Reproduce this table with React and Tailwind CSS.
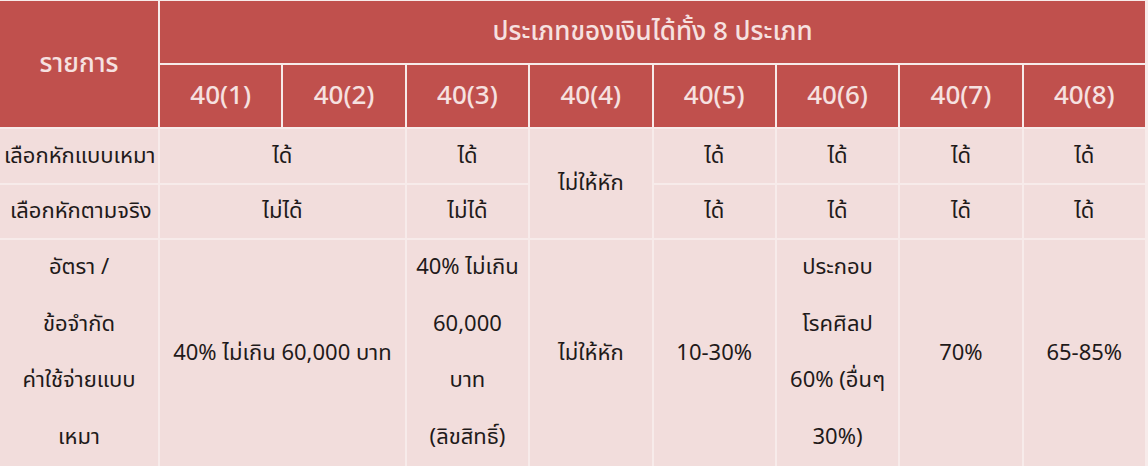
import React from "react";

const cell = "flex items-center justify-center text-center bg-[#f2dddc] text-[#1f1a1a] text-[22px]";
const head = "flex items-center justify-center bg-[#c0504d] text-[#f6e1e0] text-[26px] font-medium";

const codes = ["40(1)", "40(2)", "40(3)", "40(4)", "40(5)", "40(6)", "40(7)", "40(8)"];

const App = () => {
  return (
    <div
      className="w-[1148px] h-[466px] bg-[#f7ebea] pt-[1px] overflow-hidden"
      style={{ fontFamily: '"Noto Sans Thai", "Noto Sans", "DejaVu Sans", sans-serif' }}
    >
      <div className="w-[1145px] grid grid-cols-[158px_repeat(8,1fr)] grid-rows-[62px_62px_54px_53px_226px] gap-[2px] bg-[#f7ebea]">
        {/* header */}
        <div className={`${head} row-span-2`}>รายการ</div>
        <div className={`${head} col-span-8`}>ประเภทของเงินได้ทั้ง 8 ประเภท</div>
        {codes.map((c) => (
          <div key={c} className={head}>{c}</div>
        ))}

        {/* row 1 */}
        <div className={`${cell} justify-start pl-[4px]`}>เลือกหักแบบเหมา</div>
        <div className={`${cell} col-span-2`}>ได้</div>
        <div className={cell}>ได้</div>
        <div className={`${cell} row-span-2`}>ไม่ให้หัก</div>
        <div className={cell}>ได้</div>
        <div className={cell}>ได้</div>
        <div className={cell}>ได้</div>
        <div className={cell}>ได้</div>

        {/* row 2 */}
        <div className={`${cell} justify-start pl-[10px]`}>เลือกหักตามจริง</div>
        <div className={`${cell} col-span-2`}>ไม่ได้</div>
        <div className={cell}>ไม่ได้</div>
        <div className={cell}>ได้</div>
        <div className={cell}>ได้</div>
        <div className={cell}>ได้</div>
        <div className={cell}>ได้</div>

        {/* row 3 */}
        <div className={`${cell} leading-[56.5px]`}>
          อัตรา /<br />ข้อจำกัด<br />ค่าใช้จ่ายแบบ<br />เหมา
        </div>
        <div className={`${cell} col-span-2`}>40% ไม่เกิน 60,000 บาท</div>
        <div className={`${cell} leading-[56.5px]`}>
          40% ไม่เกิน<br />60,000<br />บาท<br />(ลิขสิทธิ์)
        </div>
        <div className={cell}>ไม่ให้หัก</div>
        <div className={cell}>10-30%</div>
        <div className={`${cell} leading-[56.5px]`}>
          ประกอบ<br />โรคศิลป<br />60% (อื่นๆ<br />30%)
        </div>
        <div className={cell}>70%</div>
        <div className={cell}>65-85%</div>
      </div>
    </div>
  );
};

export default App;
